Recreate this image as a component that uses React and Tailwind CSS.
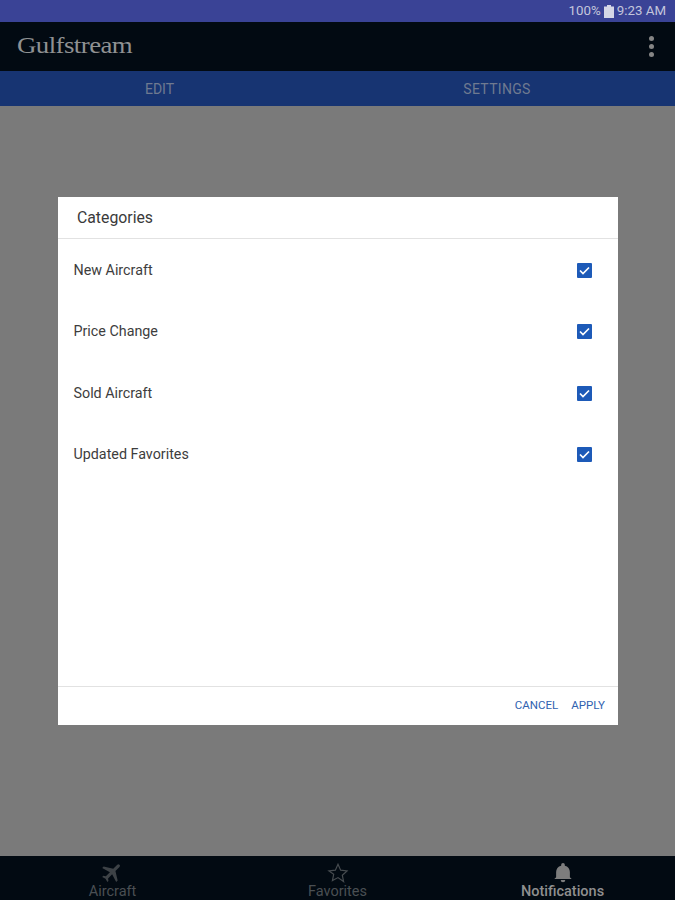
const categories = ['New Aircraft', 'Price Change', 'Sold Aircraft', 'Updated Favorites']

function CheckBox() {
  return (
    <div className="w-[15px] h-[15px] rounded-[1px] bg-[#1d5ab8] flex items-center justify-center">
      <svg width="11" height="9" viewBox="0 0 11 9" fill="none">
        <path d="M1 4.5 L4 7.5 L10 1.5" stroke="#fff" strokeWidth="1.7" />
      </svg>
    </div>
  )
}

function Tab({ label, active, children }) {
  return (
    <div className="flex-1 flex flex-col items-center pt-[6px]">
      <div className="h-[21px] flex items-center justify-center">{children}</div>
      <span className={`text-[14.500px] leading-[15px] mt-[1px] ${active ? 'font-medium text-[#8f8f8f]' : 'text-[#4a4f53]'}`}>
        {label}
      </span>
    </div>
  )
}

export default function App() {
  return (
    <div className="w-[675px] h-[900px] flex flex-col overflow-hidden bg-[#7a7a7a] font-['Roboto',sans-serif]">
      {/* Status bar */}
      <div className="h-[22px] bg-[#3a4396] flex items-center justify-end pr-[9px] text-[13.300px] text-[#c4c6dc]">
        <span>100%</span>
        <svg className="mx-[3px]" width="10" height="13" viewBox="0 0 10 13">
          <path d="M3 0h4v1.500h3V13H0V1.500h3z" fill="#d5d7e6" />
        </svg>
        <span>9:23 AM</span>
      </div>

      {/* Toolbar */}
      <div className="h-[49px] bg-[#020a12] flex items-center justify-between pl-[17px] pr-[21px]">
        <span className="inline-block origin-left scale-x-[1.17] font-['Liberation_Serif',serif] text-[23px] leading-[26px] mt-[-2px] tracking-[-0.5px] text-[#8f9192]">Gulfstream</span>
        <div className="flex flex-col gap-[3px]">
          <div className="w-[5px] h-[5px] rounded-full bg-[#858585]" />
          <div className="w-[5px] h-[5px] rounded-full bg-[#858585]" />
          <div className="w-[5px] h-[5px] rounded-full bg-[#858585]" />
        </div>
      </div>

      {/* Tabs */}
      <div className="h-[35px] bg-[#173472] flex items-center pt-[1px] text-[14px] text-[#6f7a90]">
        <div className="w-[319px] text-center">EDIT</div>
        <div className="flex-1 text-center tracking-[0.3px]">SETTINGS</div>
      </div>

      {/* Dialog */}
      <div className="flex-1 pl-[58px] pr-[57px] pt-[91px]">
        <div className="h-[528px] bg-white flex flex-col">
          <div className="h-[42px] flex items-center pl-[19px] border-b border-[#e2e2e2] text-[15.800px] text-[#3a3a3a]">
            Categories
          </div>
          <div className="flex-1 pl-[15.500px] pr-[26px] pt-[0.5px]">
            {categories.map((c) => (
              <div key={c} className="h-[61.500px] flex items-center justify-between text-[14.300px] text-[#3d3d3d]">
                <span>{c}</span>
                <CheckBox />
              </div>
            ))}
          </div>
          <div className="h-[39px] border-t border-[#e2e2e2] flex items-center justify-end gap-[13px] pr-[13px] text-[11.500px] text-[#2f62b0]">
            <span>CANCEL</span>
            <span>APPLY</span>
          </div>
        </div>
      </div>

      {/* Bottom nav */}
      <div className="h-[44px] bg-[#020a12] flex overflow-hidden">
        <Tab label="Aircraft">
          <svg width="25" height="25" viewBox="0 0 24 24" fill="#3d4246" className="rotate-45">
            <path d="M21 16v-2l-8-5V3.500a1.500 1.500 0 0 0-3 0V9l-8 5v2l8-2.500V19l-2 1.500V22l3.500-1 3.500 1v-1.500L13 19v-5.500z" />
          </svg>
        </Tab>
        <Tab label="Favorites">
          <svg width="22" height="22" viewBox="0 0 24 24" fill="none" stroke="#474c50" strokeWidth="1.300">
            <path d="M12 2.500l2.900 6.400 7 .8-5.200 4.700 1.400 6.900L12 17l-6.100 3.300 1.400-6.900L2.100 9.700l7-.8z" />
          </svg>
        </Tab>
        <Tab label="Notifications" active>
          <svg width="22" height="24" viewBox="0 0 24 24" fill="#7d7d7d">
            <path d="M12 22a2.500 2.500 0 0 0 2.500-2.500h-5A2.500 2.500 0 0 0 12 22zm7.500-5.500V11c0-3.500-2-6.200-5.500-7V3a2 2 0 0 0-4 0v1c-3.500.8-5.500 3.500-5.500 7v5.500L2.500 18.500h19z" />
          </svg>
        </Tab>
      </div>
    </div>
  )
}
